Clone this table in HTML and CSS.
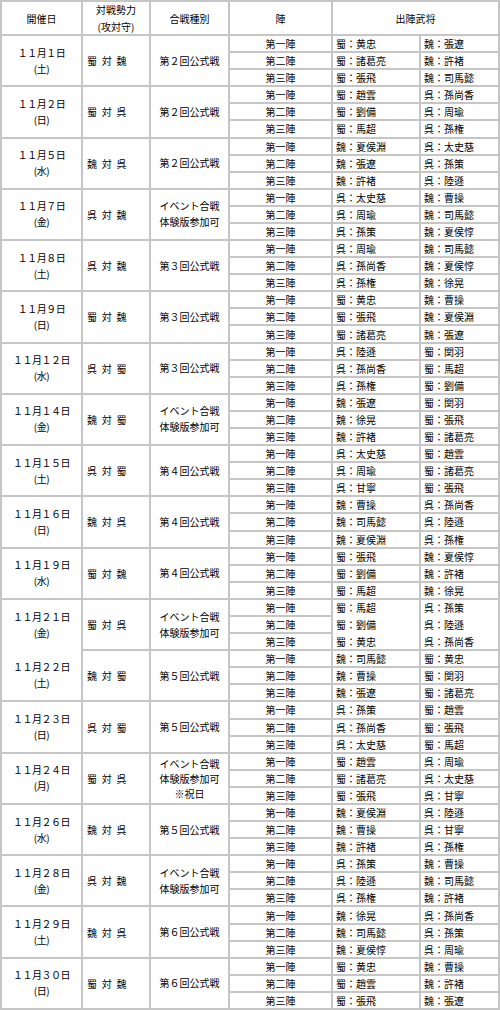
FILE: index.html
```html
<!DOCTYPE html>
<html lang="ja">
<head>
<meta charset="utf-8">
<title>出陣武将一覧</title>
<link rel="stylesheet" href="styles.css">
</head>
<body>
<div class="t">
  <div class="h">開催日</div>
  <div class="h"><span>対戦勢力</span><span>(攻対守)</span></div>
  <div class="h">合戦種別</div>
  <div class="h">陣</div>
  <div class="h h2">出陣武将</div>

  <div class="d"><span>１１月１日</span><span>(土)</span></div>
  <div class="m">蜀 対 魏</div>
  <div class="k">第２回公式戦</div>
  <div class="j">第一陣</div><div class="a">蜀：黄忠</div><div class="b">魏：張遼</div>
  <div class="j">第二陣</div><div class="a">蜀：諸葛亮</div><div class="b">魏：許褚</div>
  <div class="j">第三陣</div><div class="a">蜀：張飛</div><div class="b">魏：司馬懿</div>

  <div class="d"><span>１１月２日</span><span>(日)</span></div>
  <div class="m">蜀 対 呉</div>
  <div class="k">第２回公式戦</div>
  <div class="j">第一陣</div><div class="a">蜀：趙雲</div><div class="b">呉：孫尚香</div>
  <div class="j">第二陣</div><div class="a">蜀：劉備</div><div class="b">呉：周瑜</div>
  <div class="j">第三陣</div><div class="a">蜀：馬超</div><div class="b">呉：孫権</div>

  <div class="d"><span>１１月５日</span><span>(水)</span></div>
  <div class="m">魏 対 呉</div>
  <div class="k">第２回公式戦</div>
  <div class="j">第一陣</div><div class="a">魏：夏侯淵</div><div class="b">呉：太史慈</div>
  <div class="j">第二陣</div><div class="a">魏：張遼</div><div class="b">呉：孫策</div>
  <div class="j">第三陣</div><div class="a">魏：許褚</div><div class="b">呉：陸遜</div>

  <div class="d"><span>１１月７日</span><span>(金)</span></div>
  <div class="m">呉 対 魏</div>
  <div class="k"><span>イベント合戦</span><span>体験版参加可</span></div>
  <div class="j">第一陣</div><div class="a">呉：太史慈</div><div class="b">魏：曹操</div>
  <div class="j">第二陣</div><div class="a">呉：周瑜</div><div class="b">魏：司馬懿</div>
  <div class="j">第三陣</div><div class="a">呉：孫策</div><div class="b">魏：夏侯惇</div>

  <div class="d"><span>１１月８日</span><span>(土)</span></div>
  <div class="m">呉 対 魏</div>
  <div class="k">第３回公式戦</div>
  <div class="j">第一陣</div><div class="a">呉：周瑜</div><div class="b">魏：司馬懿</div>
  <div class="j">第二陣</div><div class="a">呉：孫尚香</div><div class="b">魏：夏侯惇</div>
  <div class="j">第三陣</div><div class="a">呉：孫権</div><div class="b">魏：徐晃</div>

  <div class="d"><span>１１月９日</span><span>(日)</span></div>
  <div class="m">蜀 対 魏</div>
  <div class="k">第３回公式戦</div>
  <div class="j">第一陣</div><div class="a">蜀：黄忠</div><div class="b">魏：曹操</div>
  <div class="j">第二陣</div><div class="a">蜀：張飛</div><div class="b">魏：夏侯淵</div>
  <div class="j">第三陣</div><div class="a">蜀：諸葛亮</div><div class="b">魏：張遼</div>

  <div class="d"><span>１１月１２日</span><span>(水)</span></div>
  <div class="m">呉 対 蜀</div>
  <div class="k">第３回公式戦</div>
  <div class="j">第一陣</div><div class="a">呉：陸遜</div><div class="b">蜀：関羽</div>
  <div class="j">第二陣</div><div class="a">呉：孫尚香</div><div class="b">蜀：馬超</div>
  <div class="j">第三陣</div><div class="a">呉：孫権</div><div class="b">蜀：劉備</div>

  <div class="d"><span>１１月１４日</span><span>(金)</span></div>
  <div class="m">魏 対 蜀</div>
  <div class="k"><span>イベント合戦</span><span>体験版参加可</span></div>
  <div class="j">第一陣</div><div class="a">魏：張遼</div><div class="b">蜀：関羽</div>
  <div class="j">第二陣</div><div class="a">魏：徐晃</div><div class="b">蜀：張飛</div>
  <div class="j">第三陣</div><div class="a">魏：許褚</div><div class="b">蜀：諸葛亮</div>

  <div class="d"><span>１１月１５日</span><span>(土)</span></div>
  <div class="m">呉 対 蜀</div>
  <div class="k">第４回公式戦</div>
  <div class="j">第一陣</div><div class="a">呉：太史慈</div><div class="b">蜀：趙雲</div>
  <div class="j">第二陣</div><div class="a">呉：周瑜</div><div class="b">蜀：諸葛亮</div>
  <div class="j">第三陣</div><div class="a">呉：甘寧</div><div class="b">蜀：張飛</div>

  <div class="d"><span>１１月１６日</span><span>(日)</span></div>
  <div class="m">魏 対 呉</div>
  <div class="k">第４回公式戦</div>
  <div class="j">第一陣</div><div class="a">魏：曹操</div><div class="b">呉：孫尚香</div>
  <div class="j">第二陣</div><div class="a">魏：司馬懿</div><div class="b">呉：陸遜</div>
  <div class="j">第三陣</div><div class="a">魏：夏侯淵</div><div class="b">呉：孫権</div>

  <div class="d"><span>１１月１９日</span><span>(水)</span></div>
  <div class="m">蜀 対 魏</div>
  <div class="k">第４回公式戦</div>
  <div class="j">第一陣</div><div class="a">蜀：張飛</div><div class="b">魏：夏侯惇</div>
  <div class="j">第二陣</div><div class="a">蜀：劉備</div><div class="b">魏：許褚</div>
  <div class="j">第三陣</div><div class="a">蜀：馬超</div><div class="b">魏：徐晃</div>

  <div class="d d6">
    <div class="dd"><span>１１月２１日</span><span>(金)</span></div>
    <div class="dd"><span>１１月２２日</span><span>(土)</span></div>
  </div>
  <div class="m">蜀 対 呉</div>
  <div class="k"><span>イベント合戦</span><span>体験版参加可</span></div>
  <div class="j">第一陣</div>
  <div class="a n3"><span>蜀：馬超</span><span>蜀：劉備</span><span>蜀：黄忠</span></div>
  <div class="b n3"><span>呉：孫策</span><span>呉：陸遜</span><span>呉：孫尚香</span></div>
  <div class="j">第二陣</div>
  <div class="j">第三陣</div>

  <div class="m">魏 対 蜀</div>
  <div class="k">第５回公式戦</div>
  <div class="j">第一陣</div><div class="a">魏：司馬懿</div><div class="b">蜀：黄忠</div>
  <div class="j">第二陣</div><div class="a">魏：曹操</div><div class="b">蜀：関羽</div>
  <div class="j">第三陣</div><div class="a">魏：張遼</div><div class="b">蜀：諸葛亮</div>

  <div class="d"><span>１１月２３日</span><span>(日)</span></div>
  <div class="m">呉 対 蜀</div>
  <div class="k">第５回公式戦</div>
  <div class="j">第一陣</div><div class="a">呉：孫策</div><div class="b">蜀：趙雲</div>
  <div class="j">第二陣</div><div class="a">呉：孫尚香</div><div class="b">蜀：張飛</div>
  <div class="j">第三陣</div><div class="a">呉：太史慈</div><div class="b">蜀：馬超</div>

  <div class="d"><span>１１月２４日</span><span>(月)</span></div>
  <div class="m">蜀 対 呉</div>
  <div class="k k3"><span>イベント合戦</span><span>体験版参加可</span><span>※祝日</span></div>
  <div class="j">第一陣</div><div class="a">蜀：趙雲</div><div class="b">呉：周瑜</div>
  <div class="j">第二陣</div><div class="a">蜀：諸葛亮</div><div class="b">呉：太史慈</div>
  <div class="j">第三陣</div><div class="a">蜀：張飛</div><div class="b">呉：甘寧</div>

  <div class="d"><span>１１月２６日</span><span>(水)</span></div>
  <div class="m">魏 対 呉</div>
  <div class="k">第５回公式戦</div>
  <div class="j">第一陣</div><div class="a">魏：夏侯淵</div><div class="b">呉：陸遜</div>
  <div class="j">第二陣</div><div class="a">魏：曹操</div><div class="b">呉：甘寧</div>
  <div class="j">第三陣</div><div class="a">魏：許褚</div><div class="b">呉：孫権</div>

  <div class="d"><span>１１月２８日</span><span>(金)</span></div>
  <div class="m">呉 対 魏</div>
  <div class="k"><span>イベント合戦</span><span>体験版参加可</span></div>
  <div class="j">第一陣</div><div class="a">呉：孫策</div><div class="b">魏：曹操</div>
  <div class="j">第二陣</div><div class="a">呉：陸遜</div><div class="b">魏：司馬懿</div>
  <div class="j">第三陣</div><div class="a">呉：孫権</div><div class="b">魏：許褚</div>

  <div class="d"><span>１１月２９日</span><span>(土)</span></div>
  <div class="m">魏 対 呉</div>
  <div class="k">第６回公式戦</div>
  <div class="j">第一陣</div><div class="a">魏：徐晃</div><div class="b">呉：孫尚香</div>
  <div class="j">第二陣</div><div class="a">魏：司馬懿</div><div class="b">呉：孫策</div>
  <div class="j">第三陣</div><div class="a">魏：夏侯惇</div><div class="b">呉：周瑜</div>

  <div class="d"><span>１１月３０日</span><span>(日)</span></div>
  <div class="m">蜀 対 魏</div>
  <div class="k">第６回公式戦</div>
  <div class="j">第一陣</div><div class="a">蜀：黄忠</div><div class="b">魏：曹操</div>
  <div class="j">第二陣</div><div class="a">蜀：趙雲</div><div class="b">魏：許褚</div>
  <div class="j">第三陣</div><div class="a">蜀：張飛</div><div class="b">魏：張遼</div>
</div>
</body>
</html>
```

FILE: styles.css
```css
html, body {
  margin: 0;
  padding: 0;
  background: #fff;
}

body {
  font-family: "Noto Sans CJK JP", "Noto Sans", sans-serif;
  font-size: 10px;
  color: #000;
}

.t {
  box-sizing: border-box;
  width: 500px;
  height: 1010px;
  display: grid;
  grid-template-columns: 79px 66px 77px 101px 86px 77px;
  grid-template-rows: 32px repeat(57, minmax(0, 1fr));
  gap: 2px;
  padding: 2px;
  background: #c6c6c6;
}

.t > div {
  background: #fff;
  display: flex;
  align-items: center;
  line-height: 15px;
  white-space: nowrap;
  min-width: 0;
  min-height: 0;
}

.h {
  flex-direction: column;
  justify-content: center;
  text-align: center;
  line-height: 17px !important;
}

.h2 {
  grid-column: span 2;
}

.d {
  grid-column: 1;
  grid-row: span 3;
  flex-direction: column;
  justify-content: center;
  letter-spacing: -0.5px;
  line-height: 16px !important;
}

.d6 {
  grid-row: span 6;
}

.dd {
  flex: 1;
  display: flex;
  flex-direction: column;
  justify-content: center;
  align-items: center;
}

.m {
  grid-column: 2;
  grid-row: span 3;
  padding-left: 4px;
  word-spacing: 2.5px;
}

.k {
  grid-column: 3;
  grid-row: span 3;
  flex-direction: column;
  justify-content: center;
  line-height: 16px !important;
}

.k3 {
  line-height: 15px !important;
}

.j {
  grid-column: 4;
  justify-content: center;
}

.a {
  grid-column: 5;
  padding-left: 3px;
}

.b {
  grid-column: 6;
  padding-left: 3px;
}

.n3 {
  grid-row: span 3;
  flex-direction: column;
  justify-content: center;
  align-items: flex-start !important;
  line-height: 17px !important;
}
```
